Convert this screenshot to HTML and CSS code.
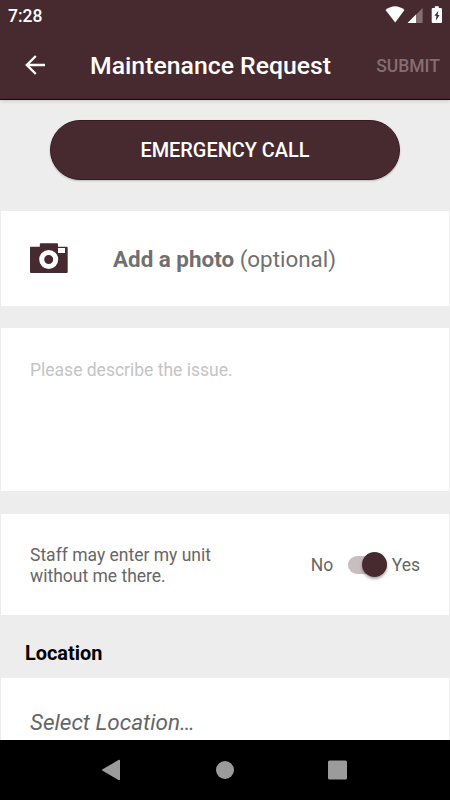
FILE: index.html
```html
<!DOCTYPE html>
<html lang="en">
<head>
<meta charset="utf-8">
<title>Maintenance Request</title>
<link rel="stylesheet" href="styles.css">
</head>
<body>
<div class="screen">
  <header class="header">
    <div class="status">
      <span class="time">7:28</span>
      <svg class="status-icons" width="60" height="20" viewBox="0 0 60 20">
        <path fill="#fff" d="M.5 4.1Q10-3.400 19.500 4.100L10.200 16.400z"/>
        <path fill="#846e73" d="M37.600 2V17H22.600z"/>
        <path fill="#fff" d="M31 8.600V17H22.600z"/>
        <path fill="#fff" d="M49.800.3h4v1.700h2q1.200 0 1.200 1.200v12.500q0 1.300-1.200 1.300h-8q-1.100 0-1.100-1.300V3.200q0-1.200 1.100-1.200h2z"/>
        <path fill="#472a2f" d="M53.300 4.800l-3.900 5h2l-.5 4.900 3.600-5.600h-1.900z"/>
      </svg>
    </div>
    <div class="toolbar">
      <svg class="back" width="20" height="20" viewBox="0 0 20 20" fill="none" stroke="#fff" stroke-width="2.4"><path d="M20 10H2M10.800 1L1.800 10l9 9"/></svg>
      <h1 class="title">Maintenance Request</h1>
      <span class="submit">SUBMIT</span>
    </div>
  </header>
  <main class="content">
    <button class="emergency">EMERGENCY CALL</button>
    <section class="card photo">
      <svg class="camera" width="38" height="31" viewBox="0 0 38 31">
        <path fill="#472a2f" d="M1 3.800h8.800V1.200q0-1 1-1H27q1 0 1 1v2.600h8.700q1 0 1 1v24q0 1.200-1 1.200H1q-1 0-1-1V4.800q0-1 1-1z"/>
        <circle cx="18.700" cy="16.500" r="7" fill="none" stroke="#fff" stroke-width="5"/>
        <path fill="#fff" d="M28 5h7v5h-7z"/>
      </svg>
      <span class="photo-label"><b>Add a photo</b> (optional)</span>
    </section>
    <section class="card describe">Please describe the issue.</section>
    <section class="card access">
      <p class="access-text">Staff may enter my unit<br>without me there.</p>
      <span class="no">No</span>
      <span class="switch"><span class="thumb"></span></span>
      <span class="yes">Yes</span>
    </section>
    <h2 class="section-title">Location</h2>
    <section class="card location">Select Location…</section>
  </main>
  <nav class="nav">
    <svg width="450" height="60" viewBox="0 0 450 60" fill="#9b9b9b">
      <path d="M102.600 29.200L118.500 20.100q1.500-.8 1.500.7v18.400q0 1.500-1.500.7L102.600 30.800q-1.200-.8 0-1.600z"/>
      <circle cx="225" cy="30" r="9"/>
      <rect x="328" y="20.500" width="19" height="19" rx="1.500"/>
    </svg>
  </nav>
</div>
</body>
</html>
```
FILE: styles.css
```css
* { box-sizing: border-box; }
body, h1, h2, p { margin: 0; }
body { font-family: Roboto, "Liberation Sans", sans-serif; color: #666; }
.screen { width: 450px; height: 800px; display: flex; flex-direction: column; overflow: hidden; background: #ededed; }
.header { height: 100px; flex: none; background: #472a2f; color: #fff; border-bottom: 1px solid #160609; box-shadow: 0 1px 4px rgba(0,0,0,.16); z-index: 1; }
.status { height: 30px; display: flex; justify-content: space-between; padding: 6px 5px 0 8px; }
.time { font-size: 17.5px; line-height: 20px; font-weight: 500; }
.toolbar { height: 70px; display: flex; align-items: center; padding: 0 10px 0 25px; }
.back { flex: none; }
.title { font-size: 24.8px; line-height: 30px; font-weight: 500; margin: 1px 0 0 45px; white-space: nowrap; }
.submit { font-size: 17.5px; font-weight: 500; margin: 2px 0 0 auto; color: #846e73; }
.content { flex: 1; min-height: 0; overflow: hidden; padding: 20px 1px 0; }
.emergency { display: block; width: 350px; height: 60px; margin: 0 auto 31px; padding: 2px 0 0; border: 1px solid #3b1820; border-radius: 30px; background: #472a2f; color: #fff; font: 500 19.9px/56px Roboto, sans-serif; box-shadow: 0 1px 2px rgba(0,0,0,.22); }
.card { background: #fff; }
.photo { height: 95px; display: flex; align-items: center; padding-left: 29px; margin-bottom: 22px; }
.photo-label { font-size: 22.4px; margin-left: 45px; color: #707070; }
.describe { height: 163px; padding: 32px 29px; font-size: 17.5px; line-height: 21px; color: #c4c4c4; margin-bottom: 23px; }
.access { height: 101px; display: flex; align-items: center; padding: 0 29px; font-size: 17.5px; }
.access-text { line-height: 20.5px; width: 281px; margin-top: 2px; }
.no { width: 37px; margin-top: 1px; }
.switch { width: 39px; height: 18px; border-radius: 9px; background: #c8bec0; display: flex; align-items: center; justify-content: flex-end; }
.thumb { width: 25px; height: 25px; flex: none; border-radius: 50%; background: #472a2f; box-shadow: 0 2px 3px rgba(0,0,0,.35); }
.yes { margin-left: 5px; margin-top: 1px; }
.section-title { height: 63px; padding: 27px 24px 0; font-size: 19.9px; line-height: 24px; color: #000; font-weight: 700; }
.location { height: 100px; padding: 30px 29px; font-size: 22.5px; line-height: 28px; font-style: italic; }
.nav { height: 60px; flex: none; background: #000; }
.nav svg { display: block; }
```
